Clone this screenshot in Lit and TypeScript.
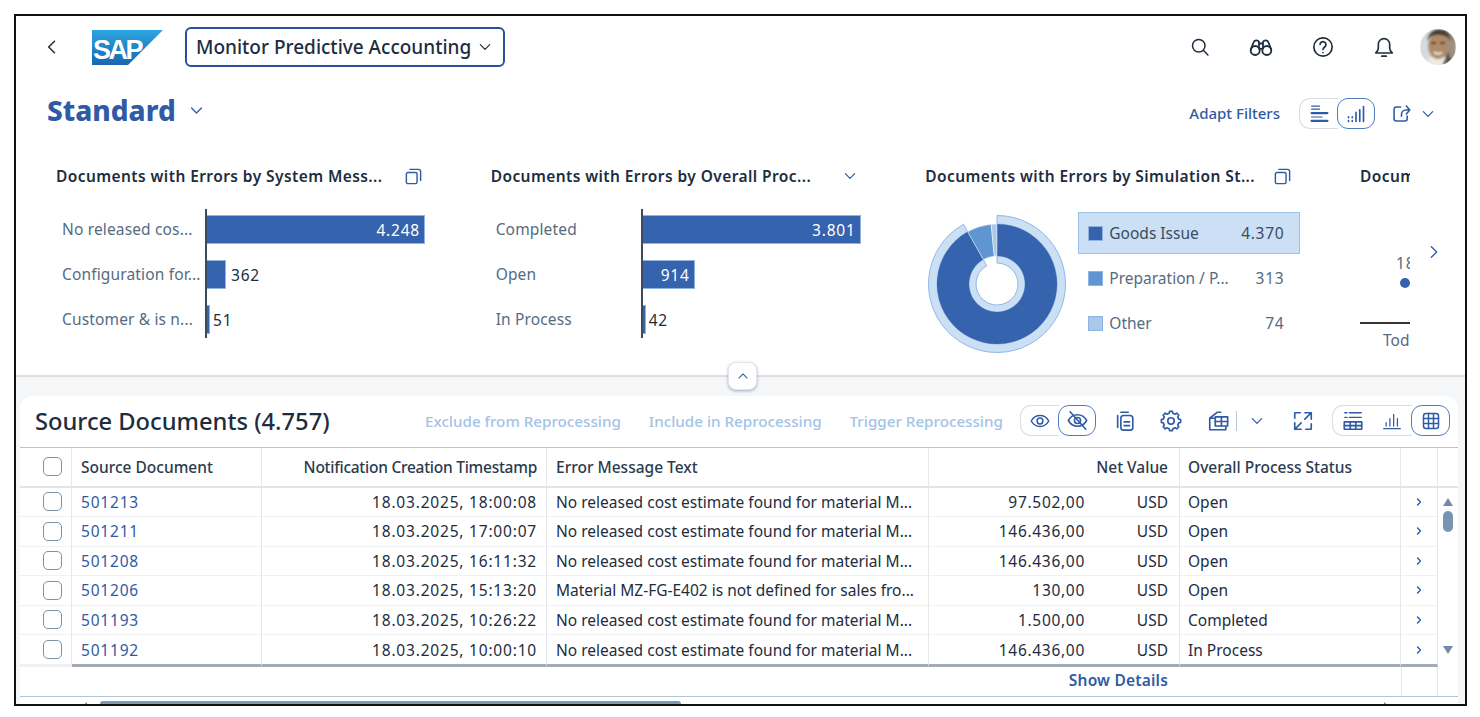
import { html, css, svg, LitElement } from 'lit';
import { customElement } from 'lit/decorators.js';

const BARS_1 = [
  { label: 'No released cos...', value: '4.248', width: 218, inside: true },
  { label: 'Configuration for...', value: '362', width: 19, inside: false },
  { label: 'Customer & is n...', value: '51', width: 3, inside: false },
];
const BARS_2 = [
  { label: 'Completed', value: '3.801', width: 218, inside: true },
  { label: 'Open', value: '914', width: 52, inside: true },
  { label: 'In Process', value: '42', width: 3, inside: false },
];
const LEGEND = [
  { label: 'Goods Issue', value: '4.370', color: '#3563ad', selected: true },
  { label: 'Preparation / P...', value: '313', color: '#5f95d0', selected: false },
  { label: 'Other', value: '74', color: '#a9c8ea', selected: false },
];
const NO_COST = 'No released cost estimate found for material M...';
const ROWS = [
  ['501213', '18.03.2025, 18:00:08', NO_COST, '97.502,00', 'Open'],
  ['501211', '18.03.2025, 17:00:07', NO_COST, '146.436,00', 'Open'],
  ['501208', '18.03.2025, 16:11:32', NO_COST, '146.436,00', 'Open'],
  ['501206', '18.03.2025, 15:13:20', 'Material MZ-FG-E402 is not defined for sales fro...', '130,00', 'Open'],
  ['501193', '18.03.2025, 10:26:22', NO_COST, '1.500,00', 'Completed'],
  ['501192', '18.03.2025, 10:00:10', NO_COST, '146.436,00', 'In Process'],
];

// donut slice between two radii, angles in degrees clockwise from the top
function slice(r0: number, r1: number, a0: number, a1: number) {
  const pt = (r: number, a: number) => {
    const t = ((a - 90) * Math.PI) / 180;
    return `${(80 + r * Math.cos(t)).toFixed(2)} ${(80 + r * Math.sin(t)).toFixed(2)}`;
  };
  const large = a1 - a0 > 180 ? 1 : 0;
  return `M${pt(r1, a0)}A${r1} ${r1} 0 ${large} 1 ${pt(r1, a1)}L${pt(r0, a1)}A${r0} ${r0} 0 ${large} 0 ${pt(r0, a0)}Z`;
}

function gearPath() {
  let d = '';
  for (let i = 0; i < 8; i++) {
    const a = (i * Math.PI) / 4;
    const p = [[-0.24, 8.6], [-0.15, 10.6], [0.15, 10.6], [0.24, 8.6]].map(([o, r]) => {
      const t = a + o;
      return `${(12 + r * Math.cos(t)).toFixed(2)} ${(12 + r * Math.sin(t)).toFixed(2)}`;
    });
    d += `${i ? 'L' : 'M'}${p.join('L')}`;
  }
  return d + 'Z';
}

const icon = (body: unknown, size = 24) => html`
  <svg class="ico" width=${size} height=${size} viewBox="0 0 24 24" fill="none" stroke="currentColor"
    stroke-width="1.8" stroke-linecap="round" stroke-linejoin="round">${body}</svg>
`;

const ICONS = {
  back: svg`<path d="M15 5l-7 7 7 7"/>`,
  down: svg`<path d="M5 8.5l7 7 7-7"/>`,
  up: svg`<path d="M5 15.5l7-7 7 7"/>`,
  right: svg`<path d="M8.5 5l7 7-7 7"/>`,
  search: svg`<circle cx="10.5" cy="10.5" r="7.5"/><path d="M16 16l5.500 5.500"/>`,
  binoculars: svg`<circle cx="6.2" cy="15.5" r="4.5"/><circle cx="17.8" cy="15.5" r="4.5"/><path d="M1.8 14.5L4.5 7.5a3 3 0 0 1 5.500-.5V13M22.2 14.5L19.5 7.5a3 3 0 0 0-5.500-.5V13M10 8.500h4M10.500 14c1-.6 2-.6 3 0"/>`,
  help: svg`<circle cx="12" cy="12" r="10"/><path d="M8.800 9.300a3.200 3.200 0 1 1 5 2.700c-1.200.8-1.800 1.400-1.800 2.800"/><path d="M12 18v.1"/>`,
  bell: svg`<path d="M3 18.500c1.800-1.500 2.800-3 2.800-5.500V9a6.200 6.200 0 0 1 12.400 0v4c0 2.500 1 4 2.800 5.500zM9.500 22h5"/>`,
  copy: svg`<rect x="3" y="7" width="13.500" height="14" rx="2"/><path d="M7.500 3h11a2.500 2.500 0 0 1 2.500 2.500V17"/>`,
  share: svg`<path d="M11 4.500H6a2.500 2.500 0 0 0-2.500 2.500v11A2.500 2.500 0 0 0 6 20.500h10a2.500 2.500 0 0 0 2.500-2.500v-3M12 15v-2a5 5 0 0 1 5-5h4M17.500 3.500L21.500 8l-4 4.500"/>`,
  barsH: svg`<path d="M3 3.500h9M3 7h9" stroke-width="1.400"/><path d="M3 11.500h18" stroke-width="2.600"/><path d="M3 16h12" stroke-width="1.400"/><path d="M3 20.500h18" stroke-width="2.600"/>`,
  barsV: svg`<path d="M3 21v-1M3 16.500v-1M7.500 21v-1M7.500 16.500v-1M12 21V10M16.500 21V7M21 21V3" stroke-width="2"/>`,
  eye: svg`<path d="M1.500 12C4 7.500 7.500 5.500 12 5.500s8 2 10.500 6.500C20 16.500 16.500 18.500 12 18.500S4 16.500 1.500 12z"/><circle cx="12" cy="12" r="3.500"/>`,
  eyeOff: svg`<path d="M1.500 12C4 7.500 7.500 5.500 12 5.500s8 2 10.500 6.500C20 16.500 16.500 18.500 12 18.500S4 16.500 1.500 12z"/><circle cx="12" cy="12" r="3.500"/><path d="M3.500 2l18 20"/>`,
  docs: svg`<path d="M7.500 2.500h8M4 6v13"/><rect x="7.500" y="6" width="13" height="16" rx="3"/><path d="M11 13h6M11 17h6"/>`,
  gear: svg`<path d=${gearPath()}/><circle cx="12" cy="12" r="3.500"/>`,
  exportTable: svg`<path d="M15 2.500H11L3 9v12.500h17.500V18M3 9h5"/><rect x="9" y="7.500" width="13.500" height="10"/><path d="M15.700 7.500v10M9 12.500h13.500"/>`,
  fullscreen: svg`<path d="M14 3h7v7M21 3l-7 7M3 14v7h7M3 21l7-7M3 9V3h6M21 15v6h-6"/>`,
  tableChart: svg`<path d="M3 3h2.500M8 3h13M3 8h2.500M8 8h13" stroke-width="1.500"/><rect x="2.500" y="13" width="19" height="8"/><path d="M2.500 17h19M9 13v8M15 13v8"/>`,
  vbarsAxis: svg`<path d="M2 21h20M5 18v-4M9.500 18V9M14 18V4M18.500 18V9" stroke-width="1.500"/>`,
  grid: svg`<rect x="3" y="3" width="18" height="18" rx="3"/><path d="M3 9h18M3 15h18M9 3v18M15 3v18"/>`,
};

@customElement('app-root')
export class AppRoot extends LitElement {
  static override styles = css`
    :host {
      display: block;
      width: 1480px;
      height: 717px;
      box-sizing: border-box;
      padding: 14px 13px 11px 14px;
      background: #fff;
      font-family: 'Noto Sans', 'Open Sans', sans-serif;
      color: #1d2d3e;
    }
    .ico { display: block; flex: none; }
    .frame {
      position: relative;
      box-sizing: border-box;
      height: 692px;
      border: 2px solid #111;
      display: flex;
      flex-direction: column;
      overflow: hidden;
      background: #fff;
    }

    /* shell bar */
    .shell {
      flex: none;
      height: 62px;
      display: flex;
      align-items: center;
      padding-left: 26px;
    }
    .logo { margin-left: 30px; display: block; }
    .app-btn {
      margin-left: 21px;
      box-sizing: border-box;
      width: 320px;
      height: 40px;
      border: 2px solid #2c4f9e;
      border-radius: 6px;
      display: flex;
      align-items: center;
      padding-left: 9px;
      gap: 6px;
      font-size: 19px;
      font-weight: 500;
      white-space: nowrap;
    }
    .shell-icons {
      margin-left: auto;
      display: flex;
      align-items: center;
      padding-right: 9px;
    }
    .shell-icons .ico { margin-right: 39px; }
    .avatar { display: block; margin-left: -14px; }

    /* variant row */
    .variant {
      flex: none;
      height: 64px;
      display: flex;
      align-items: center;
      padding-left: 31px;
      color: #2f5ba6;
    }
    .variant h1 {
      margin: 0;
      font-size: 28px;
      font-weight: 800;
      line-height: 1;
    }
    .variant .caret { margin-left: 12px; }
    .variant-tools {
      margin-left: auto;
      margin-top: 7px;
      display: flex;
      align-items: center;
      padding-right: 29px;
    }
    .adapt { font-size: 15px; font-weight: 500; margin: -2px 19px 0 0; }

    .seg { display: flex; height: 31px; color: #2f5ba6; }
    .seg > div {
      box-sizing: border-box;
      display: flex;
      align-items: center;
      justify-content: center;
      border: 1.5px solid #d5dde6;
      border-right: none;
      background: #fff;
    }
    .seg > div + div { border-left: none; }
    .seg > div:first-child { border-radius: 11px 0 0 11px; }
    .seg > div.on {
      border: 1.5px solid #4f7fc0;
      border-radius: 11px;
      margin-left: -1px;
    }
    .variant-tools .share { margin-left: 16px; }
    .variant-tools .caret2 { margin-left: 8px; }

    /* charts */
    .charts {
      flex: none;
      height: 235px;
      box-sizing: border-box;
      display: flex;
      align-items: flex-start;
      border-bottom: 2px solid #dcdfe4;
      padding-left: 40px;
    }
    .chart-clip {
      width: 1354px;
      flex: none;
      display: grid;
      grid-template-columns: 434.67px 434.67px 434.67px 50px;
      overflow: hidden;
    }
    .chart { padding-top: 24px; overflow: hidden; }
    .chart-title {
      height: 20px;
      display: flex;
      align-items: center;
      width: 367px;
      justify-content: space-between;
      font-size: 15.5px;
      font-weight: 600;
      letter-spacing: 0.42px;
      line-height: 20px;
      white-space: nowrap;
      color: #1d2d3e;
    }
    .chart-title .ico { color: #2f5ba6; }
    .bars {
      margin-top: 23px;
      display: grid;
      grid-template-columns: 149px 1fr;
    }
    .bars.second { grid-template-columns: 150px 1fr; }
    .bar-labels {
      display: flex;
      flex-direction: column;
      gap: 16px;
      padding: 6px 0 4px 6px;
      color: #556b82;
      font-size: 15.5px;
      letter-spacing: 0.15px;
      white-space: nowrap;
    }
    .bars.second .bar-labels { padding-left: 5px; }
    .bar-labels div { height: 29px; line-height: 29px; }
    .bar-plot {
      border-left: 2px solid #3b4a5c;
      display: flex;
      flex-direction: column;
      gap: 16px;
      padding: 6px 0 4px;
    }
    .bar-row {
      height: 29px;
      display: flex;
      align-items: center;
      font-size: 15.5px;
      letter-spacing: 0.8px;
    }
    .bar {
      box-sizing: border-box;
      height: 29px;
      background: #3563ad;
      border: 1px solid #8fb4e0;
      border-left: none;
      color: #fff;
      display: flex;
      align-items: center;
      justify-content: flex-end;
      padding-right: 4px;
      flex: none;
    }
    .bar.thin { padding: 0; }
    .bar-value { margin-left: 5px; }
    .bar.tiny + .bar-value { margin-left: 3px; }

    .donut-wrap { display: flex; margin-top: 18px; }
    .donut { display: block; margin: 0 0 0 -8px; flex: none; }
    .legend {
      width: 222px;
      margin: 8px 0 0 1px;
      display: flex;
      flex-direction: column;
      gap: 3px;
      font-size: 15.5px;
      color: #556b82;
      flex: none;
    }
    .legend-row {
      box-sizing: border-box;
      height: 42px;
      display: flex;
      align-items: center;
      padding: 0 16px 0 10px;
      white-space: nowrap;
    }
    .legend-row.sel {
      background: #cbe0f4;
      border: 1px solid #9cc3ea;
      padding: 0 15px 0 9px;
      color: #3a4c61;
    }
    .swatch {
      width: 15px;
      height: 15px;
      box-sizing: border-box;
      border: 1px solid #8fb4e0;
      margin-right: 6px;
      flex: none;
    }
    .legend-row span:last-child { margin-left: auto; letter-spacing: 0.7px; }

    .peek {
      width: 300px;
      color: #556b82;
      font-size: 15.5px;
    }
    .peek .date { margin: 67px 0 0 36px; line-height: 20px; white-space: nowrap; letter-spacing: 0.8px; }
    .peek .dot {
      margin: 5px 0 0 40px;
      width: 10px;
      height: 10px;
      border-radius: 50%;
      background: #3563ad;
    }
    .peek .axis { margin-top: 34px; height: 1.5px; background: #333; width: 50px; }
    .peek .tod { margin: 6px 0 0 23px; line-height: 20px; white-space: nowrap; }
    .next { color: #2f5ba6; margin: 101px 0 0 15px; }

    /* lower part */
    .lower {
      position: relative;
      flex: 1;
      min-height: 0;
      background: #f5f6f7;
      padding: 19px 7px 0 4px;
    }
    .collapse {
      position: absolute;
      left: 712px;
      top: -15px;
      box-sizing: border-box;
      width: 29px;
      height: 28px;
      background: #fff;
      border: 1px solid #e3e7ec;
      border-radius: 8px;
      box-shadow: 0 1px 3px rgba(60, 80, 110, 0.45);
      display: flex;
      align-items: center;
      justify-content: center;
      color: #2f5ba6;
    }
    .panel {
      background: #fff;
      border-radius: 12px 12px 0 0;
    }
    .toolbar {
      height: 51px;
      box-sizing: border-box;
      display: flex;
      align-items: center;
      padding: 0 8px 2px 15px;
      color: #2f5ba6;
    }
    .toolbar h2 {
      margin: 0;
      font-size: 23.7px;
      font-weight: 500;
      color: #1d2d3e;
      white-space: nowrap;
      width: 390px;
      flex: none;
    }
    .act {
      color: #a3c3e8;
      font-size: 15.2px;
      font-weight: 500;
      white-space: nowrap;
      margin-right: 28px;
    }
    .act:nth-of-type(3) { margin-right: 0; }
    .tools { margin-left: auto; display: flex; align-items: center; }
    .t-docs { margin-left: 18px; }
    .t-gear { margin-left: 24px; }
    .t-export { margin-left: 25px; }
    .t-sep { margin-left: 7px; width: 1px; height: 20px; background: #b9c6d6; }
    .t-caret { margin-left: 12px; }
    .t-full { margin-left: 27px; }
    .t-view { margin-left: 18px; }

    /* table */
    .table {
      display: grid;
      grid-template-columns: 52px 190px 285px 382px 251px 221px 37px 20px;
      grid-template-rows: 39.5px repeat(5, 29.5px) 32px 28.5px;
      border-top: 1.5px solid #b4c5d8;
      border-bottom: 1.5px solid #b4c5d8;
      font-size: 15.5px;
      box-sizing: border-box;
    }
    .row { display: contents; }
    .cell {
      box-sizing: border-box;
      display: flex;
      align-items: center;
      padding: 0 9px;
      white-space: nowrap;
      overflow: hidden;
      border-right: 1px solid #e4e6e9;
      border-bottom: 1px solid #eff1f3;
    }
    .head .cell {
      font-weight: 500;
      border-bottom: 2px solid #e1e5ea;
      color: #2b3b4e;
    }
    .head .stamp { letter-spacing: -0.26px; }
    .head .net { padding-right: 11px; }
    .head .end { border-right: none; }
    .num { justify-content: flex-end; }
    .digits { letter-spacing: 0.8px; }
    .status { padding-left: 8px; }
    .check { justify-content: center; padding: 0 0 0 14px; }
    .box {
      box-sizing: border-box;
      width: 19px;
      height: 19px;
      border: 1.5px solid #7f92a8;
      border-radius: 5px;
      background: #fff;
    }
    .link { color: #2f5ba6; }
    .money { justify-content: space-between; padding: 0 11px 0 0; }
    .money span:first-child { width: 156px; text-align: right; letter-spacing: 0.7px; }
    .nav { justify-content: center; color: #2f5ba6; padding: 0; }
    .nav .ico path { stroke-width: 3.5; }
    .last .cell { border-bottom: 3px solid #a3abb4; }
    .last .check { border-bottom-color: #eff1f3; }
    .vscroll {
      grid-column: 8;
      grid-row: 2 / 8;
      display: flex;
      flex-direction: column;
      align-items: center;
      padding-top: 10px;
    }
    .tri { width: 0; height: 0; border-left: 5.5px solid transparent; border-right: 5.5px solid transparent; }
    .tri.up { border-bottom: 8px solid #6f8caa; }
    .tri.dn { border-top: 8px solid #6f8caa; margin-top: auto; margin-bottom: 13px; }
    .thumb { margin-top: 5px; width: 10px; height: 21px; border-radius: 5px; background: #7894b2; }
    .foot-main {
      grid-column: 1 / 7;
      display: flex;
      align-items: center;
      justify-content: flex-end;
      padding: 0 233px 3px 0;
      color: #2f5ba6;
      font-weight: 600;
      font-size: 15.5px;
      letter-spacing: 0.2px;
    }
    .foot-cell { border-left: 1px solid #e4e6e9; border-right: 1px solid #e4e6e9; grid-column: 7; }

    .hscroll { height: 8px; display: flex; align-items: flex-start; padding: 4px 0 0 62px; overflow: hidden; }
    .hscroll .arrow {
      width: 0;
      height: 0;
      margin-top: 1px;
      border-top: 4px solid transparent;
      border-bottom: 4px solid transparent;
    }
    .hscroll .arrow.l { border-right: 5px solid #6f8caa; margin-right: 13px; }
    .hscroll .arrow.r { border-left: 5px solid #6f8caa; margin-left: 703px; }
    .hscroll .track {
      width: 581px;
      height: 6px;
      border-radius: 3px;
      background: #7d99b8;
    }
  `;

  private bars(items: typeof BARS_1, cls = '') {
    return html`<div class="bars ${cls}">
      <div class="bar-labels">${items.map((b) => html`<div>${b.label}</div>`)}</div>
      <div class="bar-plot">
        ${items.map((b) => html`<div class="bar-row">
          <div class="bar ${b.inside ? '' : 'thin'} ${b.width < 10 ? 'tiny' : ''}" style="width:${b.width}px">${b.inside ? b.value : ''}</div>
          ${b.inside ? '' : html`<span class="bar-value">${b.value}</span>`}
        </div>`)}
      </div>
    </div>`;
  }

  private donut() {
    const end = 330.7;
    return html`<svg class="donut" width="160" height="160" viewBox="0 0 160 160">
      <path d=${slice(60, 68.5, 0, end)} fill="#cbe0f4" stroke="#90b8e4" stroke-width="1"/>
      <path d=${slice(21, 28, 0, end)} fill="#cbe0f4" stroke="#90b8e4" stroke-width="1"/>
      <path d=${slice(28, 60, 0, end)} fill="#3563ad"/>
      <path d=${slice(28, 60, end, 354.4)} fill="#5f95d0" stroke="#fff" stroke-width="0.5"/>
      <path d=${slice(28, 60, 354.4, 359.9)} fill="#a9c8ea" stroke="#fff" stroke-width="0.5"/>
    </svg>`;
  }

  override render() {
    return html`
      <div class="frame">
        <div class="shell">
          ${icon(ICONS.back, 20)}
          <svg class="logo" width="72" height="37" viewBox="0 0 72 37">
            <defs>
              <linearGradient id="sap" x1="0" y1="0" x2="0" y2="1">
                <stop offset="0" stop-color="#2aa6e0"/>
                <stop offset="1" stop-color="#1a66b0"/>
              </linearGradient>
            </defs>
            <path d="M0 1h71L36 36H0z" fill="url(#sap)"/>
            <text x="1" y="30" font-family="Liberation Sans" font-weight="700" font-size="27" letter-spacing="-2.5" fill="#fff">SAP</text>
          </svg>
          <div class="app-btn">Monitor Predictive Accounting ${icon(ICONS.down, 16)}</div>
          <div class="shell-icons">
            ${icon(ICONS.search, 20)}
            ${icon(ICONS.binoculars, 24)}
            ${icon(ICONS.help, 22)}
            ${icon(ICONS.bell, 22)}
            <svg class="avatar" width="36" height="38" viewBox="0 0 36 38">
              <defs>
                <clipPath id="av"><circle cx="18" cy="19" r="18"/></clipPath>
                <filter id="soft"><feGaussianBlur stdDeviation="1"/></filter>
              </defs>
              <g clip-path="url(#av)" filter="url(#soft)">
                <rect width="36" height="38" fill="#d5dade"/>
                <rect x="24" width="12" height="38" fill="#9c8f7e"/>
                <path d="M6 38c1-8 5-10 12-10s12 2 13 10z" fill="#ece9e3"/>
                <ellipse cx="18" cy="18" rx="10" ry="13" fill="#b08a68"/>
                <path d="M7 13C8 4 14 1 19 1s11 3 12 12c-3-4-6-6-13-6S10 9 7 13z" fill="#4a3f34"/>
                <path d="M11 15h5M20 15h5" stroke="#3c2f26" stroke-width="2"/>
                <path d="M14 24.5c3 1.5 6 1.5 8 0" stroke="#efe7dc" stroke-width="2" fill="none"/>
                <path d="M28 24l6 14H22z" fill="#5c5448"/>
              </g>
            </svg>
          </div>
        </div>

        <div class="variant">
          <h1>Standard</h1>
          <span class="caret">${icon(ICONS.down, 17)}</span>
          <div class="variant-tools">
            <span class="adapt">Adapt Filters</span>
            <div class="seg">
              <div style="width:39px">${icon(ICONS.barsH, 21)}</div>
              <div class="on" style="width:38px">${icon(ICONS.barsV, 20)}</div>
            </div>
            <span class="share">${icon(ICONS.share, 21)}</span>
            <span class="caret2">${icon(ICONS.down, 16)}</span>
          </div>
        </div>

        <div class="charts">
          <div class="chart-clip">
            <div class="chart">
              <div class="chart-title">Documents with Errors by System Mess... ${icon(ICONS.copy, 19)}</div>
              ${this.bars(BARS_1)}
            </div>
            <div class="chart">
              <div class="chart-title">Documents with Errors by Overall Proc... ${icon(ICONS.down, 16)}</div>
              ${this.bars(BARS_2, 'second')}
            </div>
            <div class="chart">
              <div class="chart-title">Documents with Errors by Simulation St... ${icon(ICONS.copy, 19)}</div>
              <div class="donut-wrap">
                ${this.donut()}
                <div class="legend">
                  ${LEGEND.map((l) => html`<div class="legend-row ${l.selected ? 'sel' : ''}">
                    <span class="swatch" style="background:${l.color}"></span>
                    <span>${l.label}</span>
                    <span>${l.value}</span>
                  </div>`)}
                </div>
              </div>
            </div>
            <div class="chart">
              <div class="peek">
                <div class="chart-title">Documents with Errors by Date</div>
                <div class="date">18.03.2025</div>
                <div class="dot"></div>
                <div class="axis"></div>
                <div class="tod">Today</div>
              </div>
            </div>
          </div>
          <div class="next">${icon(ICONS.right, 18)}</div>
        </div>

        <div class="lower">
          <div class="collapse">${icon(ICONS.up, 14)}</div>
          <div class="panel">
            <div class="toolbar">
              <h2>Source Documents (4.757)</h2>
              <span class="act">Exclude from Reprocessing</span>
              <span class="act">Include in Reprocessing</span>
              <span class="act">Trigger Reprocessing</span>
              <div class="tools">
                <div class="seg">
                  <div style="width:39px">${icon(ICONS.eye, 20)}</div>
                  <div class="on" style="width:38px">${icon(ICONS.eyeOff, 21)}</div>
                </div>
                <span class="t-docs">${icon(ICONS.docs, 22)}</span>
                <span class="t-gear">${icon(ICONS.gear, 22)}</span>
                <span class="t-export">${icon(ICONS.exportTable, 22)}</span>
                <span class="t-sep"></span>
                <span class="t-caret">${icon(ICONS.down, 16)}</span>
                <span class="t-full">${icon(ICONS.fullscreen, 22)}</span>
                <div class="seg t-view">
                  <div style="width:40px">${icon(ICONS.tableChart, 22)}</div>
                  <div style="width:40px">${icon(ICONS.vbarsAxis, 20)}</div>
                  <div class="on" style="width:39px">${icon(ICONS.grid, 20)}</div>
                </div>
              </div>
            </div>
            <div class="table">
              <div class="row head">
                <div class="cell check"><div class="box"></div></div>
                <div class="cell">Source Document</div>
                <div class="cell num stamp">Notification Creation Timestamp</div>
                <div class="cell">Error Message Text</div>
                <div class="cell num net">Net Value</div>
                <div class="cell status">Overall Process Status</div>
                <div class="cell"></div>
                <div class="cell end"></div>
              </div>
              ${ROWS.map((r, i) => html`
                <div class="row ${i === ROWS.length - 1 ? 'last' : ''}">
                  <div class="cell check"><div class="box"></div></div>
                  <div class="cell link digits">${r[0]}</div>
                  <div class="cell num digits">${r[1]}</div>
                  <div class="cell">${r[2]}</div>
                  <div class="cell money"><span>${r[3]}</span><span>USD</span></div>
                  <div class="cell status">${r[4]}</div>
                  <div class="cell nav">${icon(ICONS.right, 10)}</div>
                </div>`)}
              <div class="vscroll"><div class="tri up"></div><div class="thumb"></div><div class="tri dn"></div></div>
              <div class="foot-main">Show Details</div>
              <div class="foot-cell"></div>
            </div>
            <div class="hscroll">
              <div class="arrow l"></div>
              <div class="track"></div>
              <div class="arrow r"></div>
            </div>
          </div>
        </div>
      </div>
    `;
  }
}

declare global {
  interface HTMLElementTagNameMap {
    'app-root': AppRoot;
  }
}
